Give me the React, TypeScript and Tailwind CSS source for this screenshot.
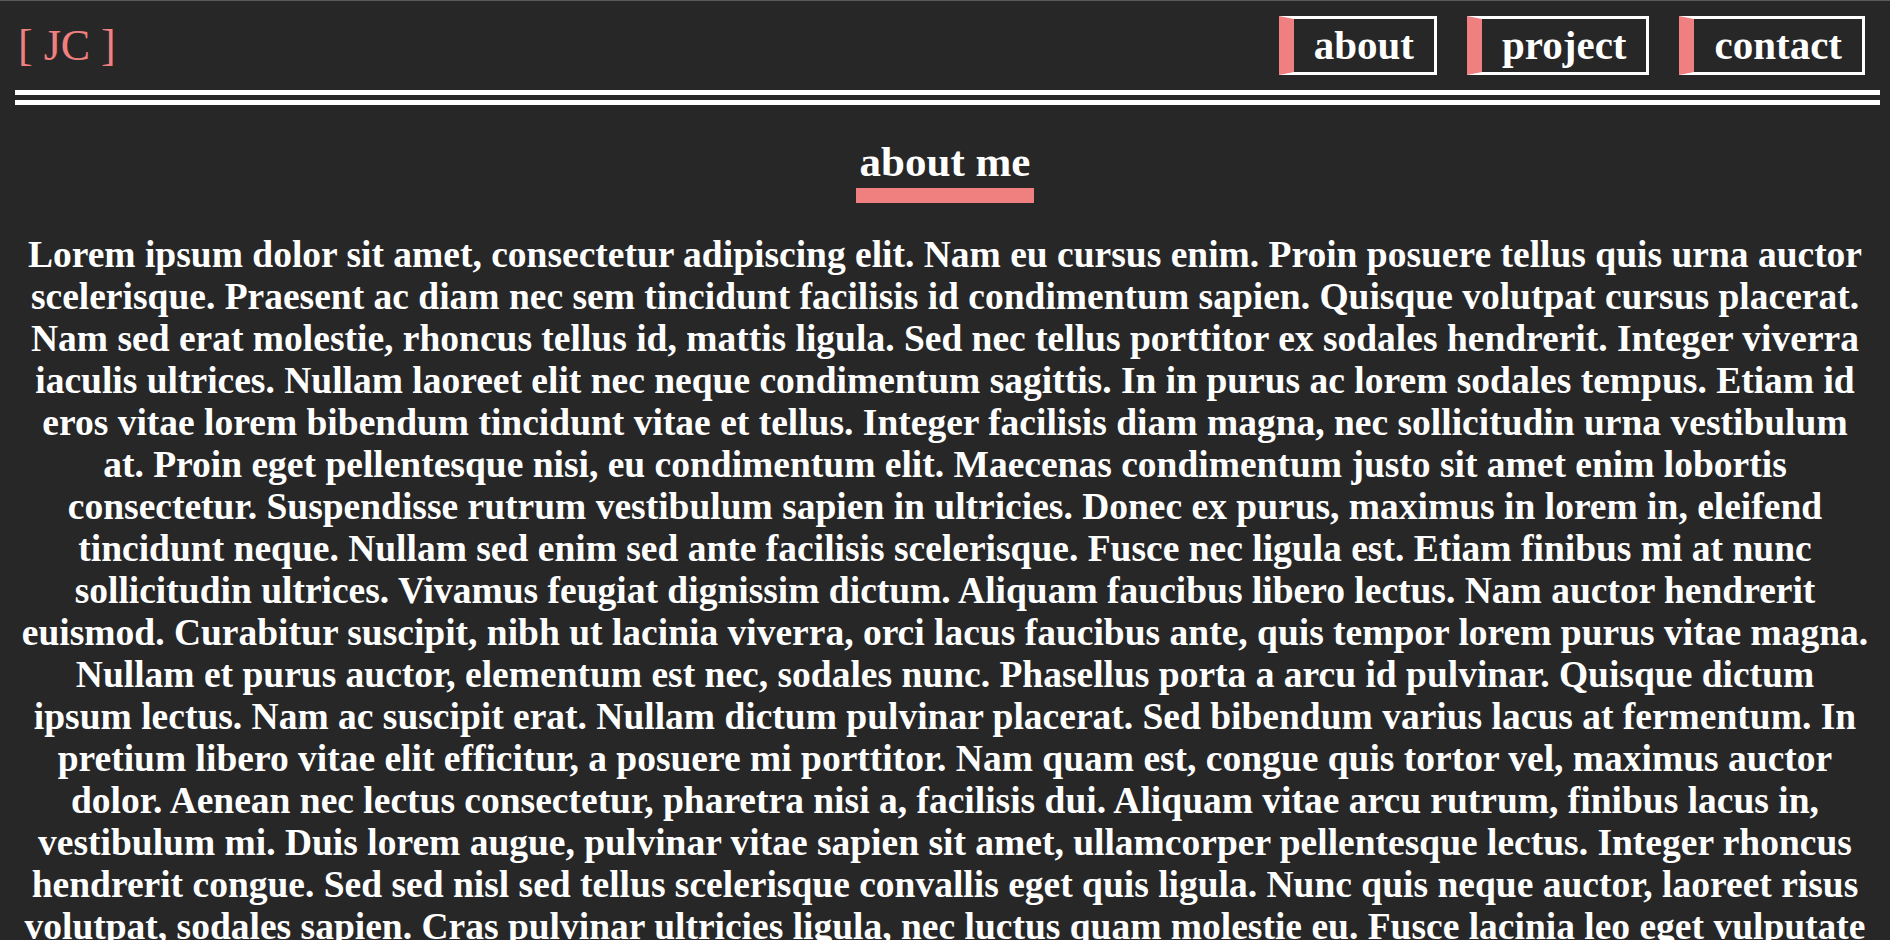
const navItems = ['about', 'project', 'contact'];

const aboutLines = [
  'Lorem ipsum dolor sit amet, consectetur adipiscing elit. Nam eu cursus enim. Proin posuere tellus quis urna auctor',
  'scelerisque. Praesent ac diam nec sem tincidunt facilisis id condimentum sapien. Quisque volutpat cursus placerat.',
  'Nam sed erat molestie, rhoncus tellus id, mattis ligula. Sed nec tellus porttitor ex sodales hendrerit. Integer viverra',
  'iaculis ultrices. Nullam laoreet elit nec neque condimentum sagittis. In in purus ac lorem sodales tempus. Etiam id',
  'eros vitae lorem bibendum tincidunt vitae et tellus. Integer facilisis diam magna, nec sollicitudin urna vestibulum',
  'at. Proin eget pellentesque nisi, eu condimentum elit. Maecenas condimentum justo sit amet enim lobortis',
  'consectetur. Suspendisse rutrum vestibulum sapien in ultricies. Donec ex purus, maximus in lorem in, eleifend',
  'tincidunt neque. Nullam sed enim sed ante facilisis scelerisque. Fusce nec ligula est. Etiam finibus mi at nunc',
  'sollicitudin ultrices. Vivamus feugiat dignissim dictum. Aliquam faucibus libero lectus. Nam auctor hendrerit',
  'euismod. Curabitur suscipit, nibh ut lacinia viverra, orci lacus faucibus ante, quis tempor lorem purus vitae magna.',
  'Nullam et purus auctor, elementum est nec, sodales nunc. Phasellus porta a arcu id pulvinar. Quisque dictum',
  'ipsum lectus. Nam ac suscipit erat. Nullam dictum pulvinar placerat. Sed bibendum varius lacus at fermentum. In',
  'pretium libero vitae elit efficitur, a posuere mi porttitor. Nam quam est, congue quis tortor vel, maximus auctor',
  'dolor. Aenean nec lectus consectetur, pharetra nisi a, facilisis dui. Aliquam vitae arcu rutrum, finibus lacus in,',
  'vestibulum mi. Duis lorem augue, pulvinar vitae sapien sit amet, ullamcorper pellentesque lectus. Integer rhoncus',
  'hendrerit congue. Sed sed nisl sed tellus scelerisque convallis eget quis ligula. Nunc quis neque auctor, laoreet risus',
  'volutpat, sodales sapien. Cras pulvinar ultricies ligula, nec luctus quam molestie eu. Fusce lacinia leo eget vulputate',
  'tincidunt. Donec vel dui sed nisi facilisis tempus. Morbi a nunc at tortor vestibulum feugiat sit amet non est.',
  'Mauris quis lorem et justo elementum ultrices. Pellentesque habitant morbi tristique senectus et netus.',
];

function Header() {
  return (
    <header className="ml-[15px] mr-[10px] flex items-center justify-between border-b-[15px] border-double border-white pt-[15px] pb-[15px]">
      <a href="#" className="pl-[3px] text-[44px] leading-none text-[#f08080]">
        [ JC ]
      </a>
      <nav className="flex items-center gap-[30px] pr-[15px]">
        {navItems.map((item) => (
          <a
            key={item}
            href="#"
            className="border-[3px] border-l-[15px] border-white border-l-[#f08080] px-[20px] text-[41px] leading-[53px] font-bold text-white"
          >
            {item}
          </a>
        ))}
      </nav>
    </header>
  );
}

export default function App() {
  return (
    <div className="h-screen overflow-hidden border-t border-[#5a5a5a] bg-[#272727] font-['Liberation_Serif',serif] text-white">
      <Header />

      <main className="px-[20px]">
        <section id="about" className="flex flex-col items-center">
          <h2 className="mt-[35px] border-b-[15px] border-[#f08080] px-[4px] pb-[5px] text-[43px] leading-none font-bold">
            about me
          </h2>
          <p className="mt-[31px] text-center text-[37.5px] leading-[42px] font-bold">
            {aboutLines.map((line, i) => (
              <span key={i} className="block whitespace-nowrap">
                {line}
              </span>
            ))}
          </p>
        </section>
      </main>
    </div>
  );
}
